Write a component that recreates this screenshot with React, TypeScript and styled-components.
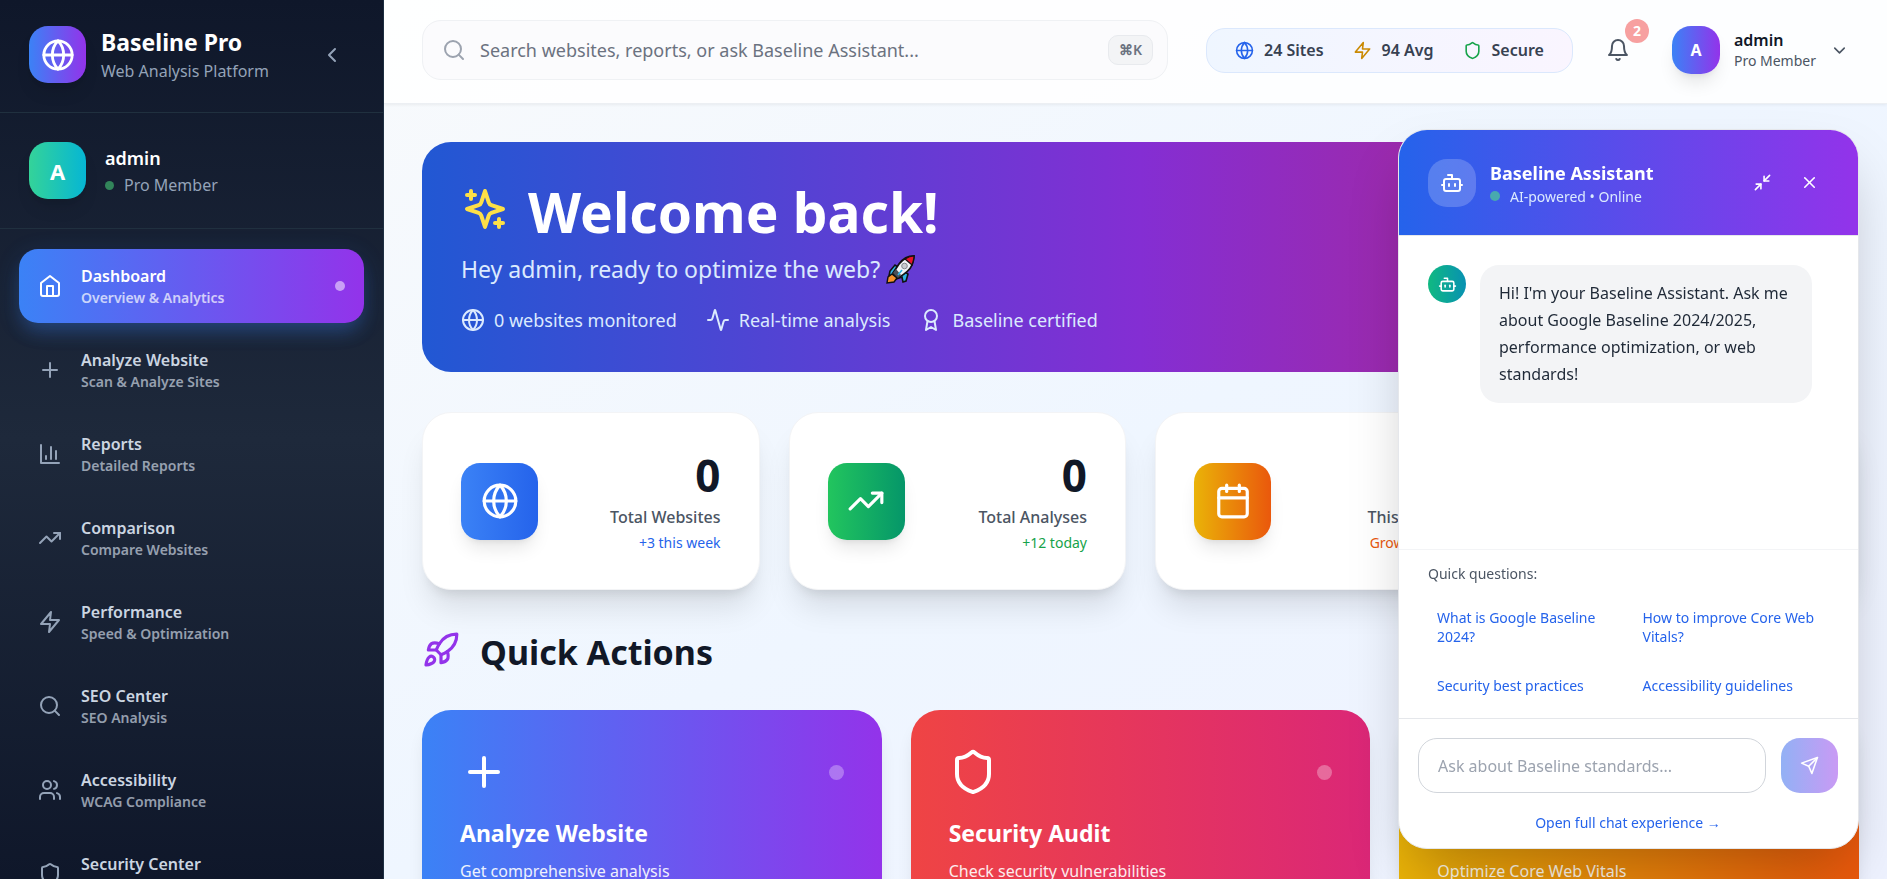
import React from "react";
import styled, { createGlobalStyle, css } from "styled-components";
import {
  Activity,
  Bot,
  Calendar,
  ChevronDown,
  ChevronLeft,
  Globe,
  Minimize2,
  Plus,
  Rocket,
  Search,
  Shield,
  TrendingUp,
  Users,
  X,
} from "lucide-react";

const GlobalStyle = createGlobalStyle`
  *, *::before, *::after { box-sizing: border-box; }
  body {
    margin: 0;
    font-family: "Noto Sans", "Open Sans", sans-serif;
    font-size: 16px;
    line-height: 24px;
    color: #111827;
  }
  h1, h2, h3, p, ul { margin: 0; padding: 0; }
  ul { list-style: none; }
  button, input { font: inherit; color: inherit; }
  button { border: 0; padding: 0; background: none; cursor: pointer; }
  a { color: inherit; text-decoration: none; }
  svg { display: block; flex-shrink: 0; }
`;

const Shell = styled.div`
  display: flex;
  height: 100vh;
  overflow: hidden;
`;

/* Icons drawn on a 24-unit grid */

type IconProps = { size: number; color?: string };

const outline = (paths: string[]) =>
  function OutlineIcon({ size, color = "currentColor" }: IconProps) {
    return (
      <svg
        width={size}
        height={size}
        viewBox="0 0 24 24"
        fill="none"
        stroke={color}
        strokeWidth="2"
        strokeLinecap="round"
        strokeLinejoin="round"
        aria-hidden="true"
      >
        {paths.map((d) => (
          <path key={d} d={d} />
        ))}
      </svg>
    );
  };

const Home = outline(["m3 9 9-7 9 7v11a2 2 0 0 1-2 2H5a2 2 0 0 1-2-2z", "M9 22V12h6v10"]);
const Bars = outline(["M3 3v18h18", "M18 17V9", "M13 17V5", "M8 17v-3"]);
const Zap = outline(["M13 2 3 14h9l-1 8 10-12h-9l1-8z"]);
const Bell = outline(["M6 8a6 6 0 0 1 12 0c0 7 3 9 3 9H3s3-2 3-9", "M10.3 21a1.94 1.94 0 0 0 3.4 0"]);
const Send = outline(["m22 2-7 20-4-9-9-4Z", "M22 2 11 13"]);
const Award = outline(["M12 2a6 6 0 1 0 0 12a6 6 0 1 0 0-12z", "M15.477 12.89 17 22l-5-3-5 3 1.523-9.11"]);
const Sparkles = outline([
  "m12 3-1.912 5.813a2 2 0 0 1-1.275 1.275L3 12l5.813 1.912a2 2 0 0 1 1.275 1.275L12 21l1.912-5.813a2 2 0 0 1 1.275-1.275L21 12l-5.813-1.912a2 2 0 0 1-1.275-1.275L12 3Z",
  "M5 3v4",
  "M19 17v4",
  "M3 5h4",
  "M17 19h4",
]);

/* Sidebar */

const Sidebar = styled.aside`
  display: flex;
  flex-direction: column;
  flex: 0 0 384px;
  overflow: hidden;
  color: #fff;
  border-right: 1px solid #1e2f42;
  background: linear-gradient(to bottom, #0f172a, #1e293b 50%, #0f172a);
`;

const SideSection = styled.div<{ $gap: number }>`
  display: flex;
  align-items: center;
  gap: ${(p) => p.$gap}px;
  padding: 29px;
  border-bottom: 1px solid #20303f;
`;

const BrandSection = styled(SideSection)`
  padding-top: 26px;
`;

const Tile = styled.div<{ $size: number; $bg: string; $shadow?: boolean }>`
  display: flex;
  align-items: center;
  justify-content: center;
  flex-shrink: 0;
  width: ${(p) => p.$size}px;
  height: ${(p) => p.$size}px;
  border-radius: 19px;
  color: #fff;
  font-weight: 700;
  background: ${(p) => p.$bg};
  ${(p) =>
    p.$shadow &&
    css`
      box-shadow: 0 12px 18px -4px rgba(0, 0, 0, 0.1), 0 5px 7px -5px rgba(0, 0, 0, 0.1);
    `}
`;

const Initial = styled(Tile)<{ $font: number }>`
  font-size: ${(p) => p.$font}px;
`;

const Grow = styled.div`
  flex: 1;
  min-width: 0;
`;

const BrandName = styled.h1`
  font-size: 23px;
  line-height: 33px;
  font-weight: 700;
`;

const Muted = styled.p`
  color: #94a3b8;
`;

const IconButton = styled.button<{ $pad: number }>`
  position: relative;
  padding: ${(p) => p.$pad}px;
  border-radius: 14px;
`;

const SideName = styled.p`
  font-size: 18px;
  line-height: 29px;
  font-weight: 600;
`;

const StatusLine = styled.p<{ $color: string; $small?: boolean }>`
  display: flex;
  align-items: center;
  gap: 10px;
  color: ${(p) => p.$color};
  ${(p) =>
    p.$small &&
    css`
      font-size: 14px;
      line-height: 19px;
    `}
`;

const Dot = styled.span<{ $size: number; $bg: string }>`
  flex-shrink: 0;
  width: ${(p) => p.$size}px;
  height: ${(p) => p.$size}px;
  border-radius: 50%;
  background: ${(p) => p.$bg};
`;

const NavList = styled.ul`
  display: flex;
  flex-direction: column;
  gap: 10px;
  padding: 20px 19px;
`;

const NavLink = styled.a<{ $active?: boolean }>`
  display: flex;
  align-items: center;
  gap: 19px;
  height: 74px;
  padding: 0 19px;
  border-radius: 19px;
  color: ${(p) => (p.$active ? "#fff" : "#cbd5e1")};
  font-weight: 600;
  ${(p) =>
    p.$active &&
    css`
      background: linear-gradient(to right, #3b82f6, #9333ea);
      box-shadow: 0 12px 18px -4px rgba(59, 130, 246, 0.25), 0 5px 24px rgba(59, 130, 246, 0.16);
    `}
  > svg {
    color: ${(p) => (p.$active ? "#fff" : "#94a3b8")};
  }
`;

const NavTitle = styled.span`
  display: block;
`;

const NavNote = styled.span`
  display: block;
  font-size: 14px;
  line-height: 20px;
  opacity: 0.7;
`;

/* Top bar */

const Main = styled.div`
  display: flex;
  flex-direction: column;
  flex: 1;
  min-width: 0;
  background: linear-gradient(to bottom right, #f8fafc, #eff6ff, #eef2ff);
`;

const TopBar = styled.header`
  display: flex;
  align-items: center;
  flex-shrink: 0;
  gap: 19px;
  padding: 20px 29px 23px 38px;
  border-bottom: 1px solid #eceff3;
  background: rgba(255, 255, 255, 0.85);
  box-shadow: 0 1px 3px rgba(0, 0, 0, 0.06);
`;

const SearchBox = styled.label`
  display: flex;
  align-items: center;
  flex: 1;
  gap: 14px;
  height: 60px;
  margin-right: 19px;
  padding: 0 14px 0 19px;
  border: 1px solid #eff1f4;
  border-radius: 19px;
  background: #fbfbfd;
  color: #9ca3af;
`;

const TextInput = styled.input<{ $tone: string }>`
  flex: 1;
  min-width: 0;
  padding: 0;
  border: 0;
  outline: 0;
  background: none;
  color: #111827;
  &::placeholder {
    color: ${(p) => p.$tone};
    opacity: 1;
  }
`;

const SearchInput = styled(TextInput)`
  font-size: 18px;
`;

const Kbd = styled.kbd`
  display: flex;
  align-items: center;
  height: 30px;
  padding: 0 10px;
  border: 1px solid #e8eaee;
  border-radius: 10px;
  background: #f3f4f6;
  color: #6b7280;
  font-family: inherit;
  font-size: 14px;
  font-weight: 600;
`;

const Pill = styled.div`
  display: flex;
  align-items: center;
  gap: 29px;
  height: 45px;
  padding: 0 28px;
  border: 1px solid #dbe8fd;
  border-radius: 19px;
  background: linear-gradient(to right, #eff6ff, #faf5ff);
`;

const PillItem = styled.span<{ $icon: string }>`
  display: flex;
  align-items: center;
  gap: 10px;
  color: #374151;
  font-weight: 600;
  > svg {
    color: ${(p) => p.$icon};
  }
`;

const Badge = styled.span`
  position: absolute;
  top: -5px;
  right: -5px;
  width: 24px;
  height: 24px;
  border-radius: 50%;
  background: #f7a0a0;
  color: #fff;
  font-size: 14px;
  font-weight: 700;
  text-align: center;
`;

const Account = styled.button`
  display: flex;
  align-items: center;
  gap: 14px;
  padding: 0 9px;
  text-align: left;
  color: #4b5563;
`;

const AccountName = styled.span`
  display: block;
  color: #111827;
  font-weight: 600;
  line-height: 22px;
`;

const AccountNote = styled.span`
  display: block;
  font-size: 14px;
  line-height: 20px;
`;

/* Dashboard */

const Content = styled.main`
  display: flex;
  flex-direction: column;
  flex: 1;
  min-height: 0;
  overflow: hidden;
  padding: 38px 28px 0 38px;
`;

const Hero = styled.section`
  flex-shrink: 0;
  height: 230px;
  padding: 38px 39px;
  border-radius: 29px;
  color: #fff;
  background: linear-gradient(to right, #2158d3, #842ed3, #c5236b);
`;

const HeroTitle = styled.h2`
  display: flex;
  gap: 19px;
  font-size: 55px;
  line-height: 64px;
  font-weight: 700;
  > svg {
    margin-top: 5px;
    color: #fde047;
  }
`;

const HeroText = styled.p`
  display: flex;
  align-items: center;
  gap: 6px;
  margin-top: 8px;
  font-size: 23px;
  line-height: 34px;
  color: #dbeafe;
`;

const HeroFacts = styled.ul`
  display: flex;
  gap: 29px;
  margin-top: 22px;
  font-size: 18px;
  color: #dbeafe;
`;

const HeroFact = styled.li`
  display: flex;
  align-items: center;
  gap: 9px;
`;

const Stats = styled.section`
  display: grid;
  grid-template-columns: repeat(4, 1fr);
  gap: 29px;
  margin-top: 40px;
`;

const StatCard = styled.article`
  display: flex;
  align-items: center;
  justify-content: space-between;
  height: 178px;
  padding: 0 38px;
  border: 1px solid #f3f4f6;
  border-radius: 29px;
  background: #fff;
  box-shadow: 0 24px 30px -6px rgba(0, 0, 0, 0.1), 0 10px 12px -7px rgba(0, 0, 0, 0.1);
`;

const StatText = styled.div`
  text-align: right;
`;

const StatValue = styled.p`
  font-size: 44px;
  line-height: 50px;
  font-weight: 700;
`;

const StatLabel = styled.p`
  margin-top: 5px;
  color: #4b5563;
  font-weight: 500;
`;

const StatNote = styled.p<{ $color: string }>`
  margin-top: 4px;
  font-size: 14px;
  line-height: 20px;
  color: ${(p) => p.$color};
`;

const SectionTitle = styled.h2`
  display: flex;
  gap: 20px;
  margin-top: 38px;
  font-size: 34px;
  line-height: 48px;
  font-weight: 700;
  > svg {
    margin-top: 3px;
    color: #9333ea;
  }
`;

const Actions = styled.section`
  display: grid;
  grid-template-columns: repeat(3, 1fr);
  flex-shrink: 0;
  gap: 29px;
  margin-top: 34px;
`;

const ActionCard = styled.a<{ $bg: string }>`
  display: block;
  height: 240px;
  padding: 38px;
  border-radius: 29px;
  color: #fff;
  background: ${(p) => p.$bg};
  box-shadow: 0 12px 18px -4px rgba(0, 0, 0, 0.1);
`;

const ActionTop = styled.div`
  display: flex;
  align-items: center;
  justify-content: space-between;
`;

const ActionTitle = styled.h3`
  margin-top: 20px;
  font-size: 23px;
  line-height: 34px;
  font-weight: 700;
`;

const ActionText = styled.p`
  margin-top: 9px;
  opacity: 0.9;
`;

/* Assistant */

const ChatPanel = styled.section`
  position: fixed;
  right: 28px;
  bottom: 30px;
  display: flex;
  flex-direction: column;
  width: 461px;
  height: 720px;
  overflow: hidden;
  border: 1px solid #e5e7eb;
  border-radius: 29px;
  background: #fff;
  box-shadow: 0 30px 60px -14px rgba(0, 0, 0, 0.25);
`;

const ChatHeader = styled.header`
  display: flex;
  align-items: center;
  gap: 14px;
  height: 106px;
  padding: 0 25px 0 29px;
  border-bottom: 1px solid #e5e7eb;
  color: #fff;
  background: linear-gradient(to right, #2563eb, #9333ea);
`;

const ChatControls = styled.div`
  display: flex;
`;

const ChatTitle = styled.h2`
  font-size: 18px;
  line-height: 27px;
  font-weight: 700;
`;

const Messages = styled.div`
  display: flex;
  flex: 1;
  align-items: flex-start;
  gap: 14px;
  padding: 29px;
`;

const BotAvatar = styled(Tile)`
  border-radius: 50%;
`;

const Bubble = styled.p`
  width: 332px;
  padding: 15px 19px;
  border-radius: 19px;
  background: #f3f4f6;
  color: #1f2937;
  line-height: 27px;
`;

const QuickQuestions = styled.div`
  padding: 14px 29px 13px;
  border-top: 1px solid #f3f4f6;
  color: #4b5563;
  font-size: 14px;
  line-height: 19px;
`;

const QuestionGrid = styled.div`
  display: grid;
  grid-template-columns: 1fr 1fr;
  gap: 10px;
  margin-top: 15px;
`;

const Question = styled.button`
  padding: 10px 9px;
  text-align: left;
  color: #2563eb;
`;

const Composer = styled.form`
  display: flex;
  flex-direction: column;
  gap: 18px;
  padding: 19px 20px 13px 19px;
  border-top: 1px solid #e5e7eb;
`;

const ComposerRow = styled.div`
  display: flex;
  gap: 15px;
`;

const ComposerInput = styled(TextInput)`
  height: 55px;
  padding: 0 19px;
  border: 1px solid #d1d5db;
  border-radius: 19px;
`;

const SendButton = styled.button`
  display: flex;
  align-items: center;
  justify-content: center;
  width: 57px;
  border-radius: 19px;
  color: #fff;
  background: linear-gradient(to right, #92b1f5, #c99af4);
`;

const ChatLink = styled.a`
  align-self: center;
  font-size: 14px;
  color: #2563eb;
`;

const RocketPicture = () => (
  <svg width="30" height="30" viewBox="0 0 30 30" role="img" aria-label="rocket">
    <path d="M4 17l-1 5 4-1 3 4 6-2 1 5 3-1 2-7-13-9-5 6z" fill="#2fb4e3" stroke="#111" strokeWidth="1.6" />
    <path d="M6 20l-4 3-1 6 7-1 3-4z" fill="#f7912b" stroke="#111" strokeWidth="1.4" />
    <path d="M28 2c-7 0-12 4-15 8l-6 9 5 5c7-4 12-8 14-13 1-3 2-6 2-9z" fill="#f2f4f6" stroke="#111" strokeWidth="1.8" />
    <path d="M28 2c-3 0-6 1-9 3l7 6c1-3 2-6 2-9z" fill="#e8122b" stroke="#111" strokeWidth="1.2" />
    <path d="M7 19l3-4 5 6-3 3z" fill="#4b5058" />
    <circle cx="18.5" cy="12" r="2.8" fill="#c9ccd0" stroke="#85898f" />
    <path d="M16 16l-4 5" stroke="#2fb4e3" strokeWidth="1.6" />
  </svg>
);

const NAV = [
  { icon: Home, title: "Dashboard", note: "Overview & Analytics", active: true },
  { icon: Plus, title: "Analyze Website", note: "Scan & Analyze Sites" },
  { icon: Bars, title: "Reports", note: "Detailed Reports" },
  { icon: TrendingUp, title: "Comparison", note: "Compare Websites" },
  { icon: Zap, title: "Performance", note: "Speed & Optimization" },
  { icon: Search, title: "SEO Center", note: "SEO Analysis" },
  { icon: Users, title: "Accessibility", note: "WCAG Compliance" },
  { icon: Shield, title: "Security Center", note: "Security Analysis" },
];

const STATS = [
  { icon: Globe, value: "0", label: "Total Websites", note: "+3 this week", color: "#2563eb", bg: "linear-gradient(to right, #3b82f6, #2563eb)" },
  { icon: TrendingUp, value: "0", label: "Total Analyses", note: "+12 today", color: "#16a34a", bg: "linear-gradient(to right, #22c55e, #059669)" },
  { icon: Calendar, value: "0", label: "This Month", note: "Growing fast", color: "#ea580c", bg: "linear-gradient(to right, #eab308, #ea580c)" },
  { icon: Award, value: "0", label: "Avg Score", note: "Excellent", color: "#9333ea", bg: "linear-gradient(to right, #a855f7, #db2777)" },
];

const ACTIONS = [
  { icon: Plus, title: "Analyze Website", text: "Get comprehensive analysis", bg: "linear-gradient(to right, #3b82f6, #9333ea)" },
  { icon: Shield, title: "Security Audit", text: "Check security vulnerabilities", bg: "linear-gradient(to right, #ef4444, #db2777)" },
  { icon: Zap, title: "Performance", text: "Optimize Core Web Vitals", bg: "linear-gradient(to right, #eab308, #ea580c)" },
];

const QUESTIONS = [
  "What is Google Baseline 2024?",
  "How to improve Core Web Vitals?",
  "Security best practices",
  "Accessibility guidelines",
];

export default function App() {
  return (
    <>
      <GlobalStyle />
      <Shell>
        <Sidebar>
          <BrandSection $gap={15}>
            <Tile $size={57} $bg="linear-gradient(to right, #3b82f6, #9333ea)" $shadow>
              <Globe size={34} />
            </Tile>
            <Grow>
              <BrandName>Baseline Pro</BrandName>
              <Muted>Web Analysis Platform</Muted>
            </Grow>
            <IconButton $pad={10} aria-label="Collapse sidebar">
              <ChevronLeft size={24} color="#94a3b8" />
            </IconButton>
          </BrandSection>
          <SideSection $gap={19}>
            <Initial $size={57} $font={22} $bg="linear-gradient(to right, #34d399, #06b6d4)" $shadow>
              A
            </Initial>
            <Grow>
              <SideName>admin</SideName>
              <StatusLine $color="#94a3b8">
                <Dot $size={9} $bg="#32855a" />
                Pro Member
              </StatusLine>
            </Grow>
          </SideSection>
          <nav aria-label="Main">
            <NavList>
              {NAV.map(({ icon: Icon, title, note, active }) => (
                <li key={title}>
                  <NavLink href="#" $active={active}>
                    <Icon size={24} />
                    <Grow>
                      <NavTitle>{title}</NavTitle>
                      <NavNote>{note}</NavNote>
                    </Grow>
                    {active && <Dot $size={10} $bg="#c9a0f6" />}
                  </NavLink>
                </li>
              ))}
            </NavList>
          </nav>
        </Sidebar>

        <Main>
          <TopBar>
            <SearchBox>
              <Search size={24} />
              <SearchInput
                type="text"
                $tone="#6b7280"
                aria-label="Search"
                placeholder="Search websites, reports, or ask Baseline Assistant..."
              />
              <Kbd>⌘K</Kbd>
            </SearchBox>
            <Pill>
              <PillItem $icon="#2563eb">
                <Globe size={19} />
                24 Sites
              </PillItem>
              <PillItem $icon="#ca8a04">
                <Zap size={19} />
                94 Avg
              </PillItem>
              <PillItem $icon="#16a34a">
                <Shield size={19} />
                Secure
              </PillItem>
            </Pill>
            <IconButton $pad={14} aria-label="Notifications">
              <Bell size={24} color="#4b5563" />
              <Badge>2</Badge>
            </IconButton>
            <Account>
              <Initial $size={48} $font={16} $bg="linear-gradient(to right, #3b82f6, #9333ea)" $shadow>
                A
              </Initial>
              <span>
                <AccountName>admin</AccountName>
                <AccountNote>Pro Member</AccountNote>
              </span>
              <ChevronDown size={19} />
            </Account>
          </TopBar>

          <Content>
            <Hero>
              <HeroTitle>
                <Sparkles size={48} />
                Welcome back!
              </HeroTitle>
              <HeroText>
                Hey admin, ready to optimize the web?
                <RocketPicture />
              </HeroText>
              <HeroFacts>
                <HeroFact>
                  <Globe size={24} />0 websites monitored
                </HeroFact>
                <HeroFact>
                  <Activity size={24} />
                  Real-time analysis
                </HeroFact>
                <HeroFact>
                  <Award size={24} />
                  Baseline certified
                </HeroFact>
              </HeroFacts>
            </Hero>

            <Stats>
              {STATS.map(({ icon: Icon, value, label, note, color, bg }) => (
                <StatCard key={label}>
                  <Tile $size={77} $bg={bg} $shadow>
                    <Icon size={38} />
                  </Tile>
                  <StatText>
                    <StatValue>{value}</StatValue>
                    <StatLabel>{label}</StatLabel>
                    <StatNote $color={color}>{note}</StatNote>
                  </StatText>
                </StatCard>
              ))}
            </Stats>

            <SectionTitle>
              <Rocket size={38} />
              Quick Actions
            </SectionTitle>

            <Actions>
              {ACTIONS.map(({ icon: Icon, title, text, bg }) => (
                <ActionCard key={title} href="#" $bg={bg}>
                  <ActionTop>
                    <Icon size={48} />
                    <Dot $size={15} $bg="rgba(255, 255, 255, 0.3)" />
                  </ActionTop>
                  <ActionTitle>{title}</ActionTitle>
                  <ActionText>{text}</ActionText>
                </ActionCard>
              ))}
            </Actions>
          </Content>
        </Main>
      </Shell>

      <ChatPanel aria-label="Baseline Assistant">
        <ChatHeader>
          <Tile $size={48} $bg="rgba(255, 255, 255, 0.2)">
            <Bot size={24} />
          </Tile>
          <Grow>
            <ChatTitle>Baseline Assistant</ChatTitle>
            <StatusLine $color="#dbeafe" $small>
              <Dot $size={10} $bg="#48a9ae" />
              AI-powered • Online
            </StatusLine>
          </Grow>
          <ChatControls>
            <IconButton $pad={14} aria-label="Minimize">
              <Minimize2 size={19} />
            </IconButton>
            <IconButton $pad={14} aria-label="Close">
              <X size={19} />
            </IconButton>
          </ChatControls>
        </ChatHeader>
        <Messages>
          <BotAvatar $size={38} $bg="linear-gradient(to right, #10b981, #0891b2)">
            <Bot size={19} />
          </BotAvatar>
          <Bubble>
            Hi! I'm your Baseline Assistant. Ask me about Google Baseline 2024/2025, performance optimization, or web
            standards!
          </Bubble>
        </Messages>
        <QuickQuestions>
          <p>Quick questions:</p>
          <QuestionGrid>
            {QUESTIONS.map((q) => (
              <Question key={q}>{q}</Question>
            ))}
          </QuestionGrid>
        </QuickQuestions>
        <Composer>
          <ComposerRow>
            <ComposerInput
              type="text"
              $tone="#9ca3af"
              aria-label="Ask the assistant"
              placeholder="Ask about Baseline standards..."
            />
            <SendButton type="button" aria-label="Send">
              <Send size={19} />
            </SendButton>
          </ComposerRow>
          <ChatLink href="#">Open full chat experience →</ChatLink>
        </Composer>
      </ChatPanel>
    </>
  );
}
